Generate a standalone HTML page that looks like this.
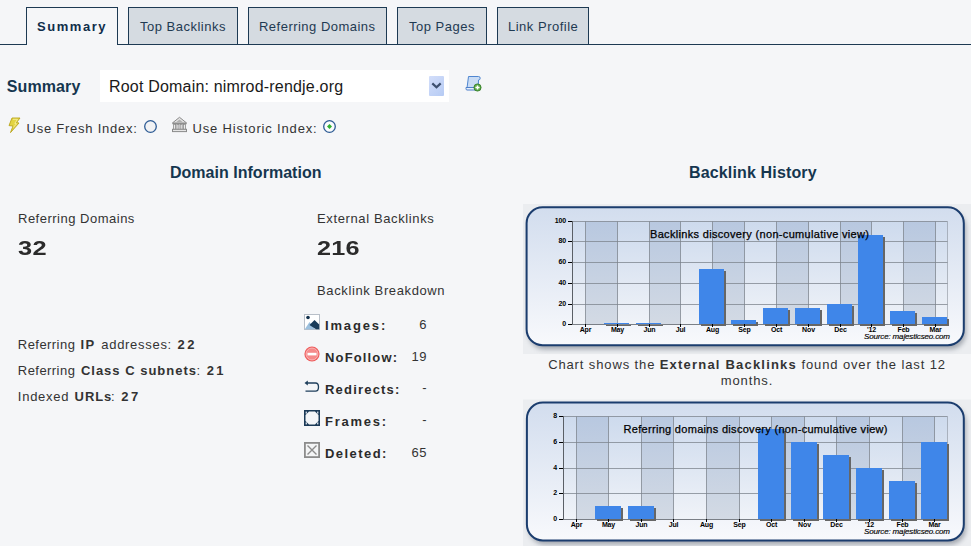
<!DOCTYPE html>
<html><head><meta charset="utf-8"><style>
html,body{margin:0;padding:0}
body{width:971px;height:546px;overflow:hidden;position:relative;background:#f5f6f8;font-family:'Liberation Sans', sans-serif}
.t{position:absolute;white-space:nowrap;font-family:'Liberation Sans', sans-serif}
.ax{font-family:'Liberation Sans', sans-serif;font-size:7px;font-weight:bold;fill:#000;letter-spacing:-0.15px}
.ti{font-family:'Liberation Sans', sans-serif;font-size:11px;fill:#000;stroke:#000;stroke-width:0.25px}
.src{font-family:'Liberation Sans', sans-serif;font-size:8px;font-style:italic;fill:#000;stroke:#000;stroke-width:0.15px}
</style></head><body>
<div style="position:absolute;left:0;top:44px;width:971px;height:1px;background:#1d3a53"></div>
<div style="position:absolute;left:26px;top:7px;width:90px;height:37px;border:1px solid #1d3a53;border-bottom:none;background:#f5f6f8"></div>
<div style="position:absolute;left:128px;top:7px;width:108px;height:36px;border:1px solid #1d3a53;background:#d5dbe1"></div>
<div style="position:absolute;left:248px;top:7px;width:137px;height:36px;border:1px solid #1d3a53;background:#d5dbe1"></div>
<div style="position:absolute;left:397px;top:7px;width:88px;height:36px;border:1px solid #1d3a53;background:#d5dbe1"></div>
<div style="position:absolute;left:497px;top:7px;width:90px;height:36px;border:1px solid #1d3a53;background:#d5dbe1"></div>
<div class="t" style="left:37.00px;top:20.00px;font-size:13px;line-height:13px;font-weight:bold;color:#0f2d4a;letter-spacing:1.55px;font-style:normal;">Summary</div>
<div class="t" style="left:140.00px;top:20.00px;font-size:13px;line-height:13px;font-weight:normal;color:#1f3a52;letter-spacing:0.5px;font-style:normal;">Top Backlinks</div>
<div class="t" style="left:259.00px;top:20.00px;font-size:13px;line-height:13px;font-weight:normal;color:#1f3a52;letter-spacing:0.48px;font-style:normal;">Referring Domains</div>
<div class="t" style="left:409.00px;top:20.00px;font-size:13px;line-height:13px;font-weight:normal;color:#1f3a52;letter-spacing:0.5px;font-style:normal;">Top Pages</div>
<div class="t" style="left:508.00px;top:20.00px;font-size:13px;line-height:13px;font-weight:normal;color:#1f3a52;letter-spacing:0.5px;font-style:normal;">Link Profile</div>
<div class="t" style="left:6.80px;top:78.96px;font-size:16px;line-height:16px;font-weight:bold;color:#15364f;letter-spacing:0.1px;font-style:normal;">Summary</div>
<div style="position:absolute;left:100px;top:70px;width:349px;height:32px;background:#fff"></div>
<div class="t" style="left:109.00px;top:79.46px;font-size:16px;line-height:16px;font-weight:normal;color:#1a1a1a;letter-spacing:0.19px;font-style:normal;">Root Domain: nimrod-rendje.org</div>
<div style="position:absolute;left:429px;top:76px;width:15px;height:20px;background:linear-gradient(135deg,#d3defa,#b6cbf4);border-radius:1px"></div>
<svg style="position:absolute;left:429px;top:76px" width="15" height="20"><path d="M3.3 7.4 L7.5 11.3 L11.7 7.4" fill="none" stroke="#3d4f6f" stroke-width="2.2"/></svg>
<svg style="position:absolute;left:465px;top:75px" width="17" height="17" viewBox="0 0 17 17">
<path d="M3.5 1.5 H13.5 Q15.2 1.5 15.2 3.2 Q15.2 5 13.5 5 L13.2 13 H2 Z" fill="#c9dcf5" stroke="#4f86d0" stroke-width="1"/>
<path d="M1 12.5 H12 V15 H2 Q1 15 1 13.7 Z" fill="#e9f0fb" stroke="#4d7fc9" stroke-width="1"/>
<circle cx="12.5" cy="12.5" r="3.6" fill="#5aa842" stroke="#2f7a24" stroke-width="0.8"/>
<path d="M12.5 10.4 V14.6 M10.4 12.5 H14.6" stroke="#fff" stroke-width="1.5"/>
</svg>
<svg style="position:absolute;left:8px;top:117px" width="14" height="17" viewBox="0 0 14 17">
<path d="M4 1 H12 L8.5 5.6 L11 6 L2.5 15.6 L5 9 L1 8.6 Z" fill="#e3d443" stroke="#b9a51c" stroke-width="0.9" stroke-linejoin="round"/>
<path d="M5 2.3 H9.5 L6.8 6.4 L8.5 6.8 L5.2 10.5" fill="none" stroke="#f6ee9a" stroke-width="0.9"/>
</svg>
<div class="t" style="left:26.50px;top:122.00px;font-size:13px;line-height:13px;font-weight:normal;color:#333;letter-spacing:0.76px;font-style:normal;">Use Fresh Index:</div>
<svg style="position:absolute;left:143px;top:119px" width="16" height="16"><circle cx="7.5" cy="7.5" r="5.8" fill="#f1f2f4" stroke="#2d5b94" stroke-width="1.3"/></svg>
<svg style="position:absolute;left:171px;top:116px" width="17" height="17" viewBox="0 0 17 17">
<path d="M8.5 1.3 L15.6 7 H1.4 Z" fill="#e4e4e4" stroke="#8a8a8a" stroke-width="1" stroke-linejoin="round"/>
<path d="M8.5 3.6 L11.6 6 H5.4 Z" fill="#b0b0b0"/>
<rect x="1.5" y="7" width="14" height="1.3" fill="#8f8f8f"/>
<rect x="2.6" y="8.3" width="2" height="5" fill="#ececec" stroke="#8a8a8a" stroke-width="0.8"/>
<rect x="5.9" y="8.3" width="2" height="5" fill="#ececec" stroke="#8a8a8a" stroke-width="0.8"/>
<rect x="9.2" y="8.3" width="2" height="5" fill="#ececec" stroke="#8a8a8a" stroke-width="0.8"/>
<rect x="12.5" y="8.3" width="2" height="5" fill="#ececec" stroke="#8a8a8a" stroke-width="0.8"/>
<rect x="1.5" y="13.3" width="14" height="2.3" fill="#e6e6e6" stroke="#8a8a8a" stroke-width="1"/>
</svg>
<div class="t" style="left:192.50px;top:122.00px;font-size:13px;line-height:13px;font-weight:normal;color:#333;letter-spacing:0.84px;font-style:normal;">Use Historic Index:</div>
<svg style="position:absolute;left:322px;top:119px" width="16" height="16"><circle cx="7.5" cy="7.5" r="5.8" fill="#fbfcfd" stroke="#2d5b94" stroke-width="1.3"/><path d="M7.5 5 L10 7.5 L7.5 10 L5 7.5 Z" fill="#2fb02f"/></svg>
<div class="t" style="left:170.00px;top:165.46px;font-size:16px;line-height:16px;font-weight:bold;color:#15364f;letter-spacing:0.02px;font-style:normal;">Domain Information</div>
<div class="t" style="left:18.00px;top:212.00px;font-size:13px;line-height:13px;font-weight:normal;color:#333;letter-spacing:0.5px;font-style:normal;">Referring Domains</div>
<div class="t" style="left:18.00px;top:238.07px;font-size:20px;line-height:20px;font-weight:bold;color:#2b2b2b;letter-spacing:0.3px;font-style:normal;"><span style="display:inline-block;transform:scaleX(1.27);transform-origin:0 0">32</span></div>
<div class="t" style="left:317.00px;top:212.00px;font-size:13px;line-height:13px;font-weight:normal;color:#333;letter-spacing:0.62px;font-style:normal;">External Backlinks</div>
<div class="t" style="left:317.00px;top:238.07px;font-size:20px;line-height:20px;font-weight:bold;color:#2b2b2b;letter-spacing:0.2px;font-style:normal;"><span style="display:inline-block;transform:scaleX(1.26);transform-origin:0 0">216</span></div>
<div class="t" style="left:317.00px;top:284.00px;font-size:13px;line-height:13px;font-weight:normal;color:#333;letter-spacing:0.62px;font-style:normal;">Backlink Breakdown</div>
<div class="t" style="left:325.00px;top:319.00px;font-size:13px;line-height:13px;font-weight:bold;color:#2b2b2b;letter-spacing:1.85px;font-style:normal;">Images:</div>
<div class="t" style="right:544px;top:318.00px;font-size:13px;line-height:13px;color:#333;letter-spacing:0.5px">6</div>
<div class="t" style="left:325.00px;top:351.00px;font-size:13px;line-height:13px;font-weight:bold;color:#2b2b2b;letter-spacing:1.15px;font-style:normal;">NoFollow:</div>
<div class="t" style="right:544px;top:350.00px;font-size:13px;line-height:13px;color:#333;letter-spacing:0.5px">19</div>
<div class="t" style="left:325.00px;top:383.00px;font-size:13px;line-height:13px;font-weight:bold;color:#2b2b2b;letter-spacing:1.2px;font-style:normal;">Redirects:</div>
<div class="t" style="right:544px;top:380.50px;font-size:13px;line-height:13px;color:#333;letter-spacing:0.5px">-</div>
<div class="t" style="left:325.00px;top:415.00px;font-size:13px;line-height:13px;font-weight:bold;color:#2b2b2b;letter-spacing:1.73px;font-style:normal;">Frames:</div>
<div class="t" style="right:544px;top:412.50px;font-size:13px;line-height:13px;color:#333;letter-spacing:0.5px">-</div>
<div class="t" style="left:325.00px;top:447.00px;font-size:13px;line-height:13px;font-weight:bold;color:#2b2b2b;letter-spacing:1.45px;font-style:normal;">Deleted:</div>
<div class="t" style="right:544px;top:446.00px;font-size:13px;line-height:13px;color:#333;letter-spacing:0.5px">65</div>
<svg style="position:absolute;left:304px;top:314px" width="16" height="16" viewBox="0 0 16 16">
<rect x="0.5" y="0.5" width="15" height="15" fill="#fff" stroke="#b8bfc8" stroke-width="1"/>
<circle cx="4" cy="3.5" r="1.8" fill="#12304d"/>
<path d="M0.8 15.2 L5.5 8 L11 15.2 Z" fill="#9cc0de"/>
<path d="M5.5 11 L10.5 6 L15.2 10.5 V15.2 H12 Z" fill="#1a3c5a"/>
</svg>
<svg style="position:absolute;left:304px;top:346px" width="16" height="16" viewBox="0 0 16 16">
<circle cx="8" cy="8" r="7.6" fill="#ee5c5c"/><circle cx="8" cy="8" r="6" fill="#f58a8a" stroke="#fbd0d0" stroke-width="0.7"/>
<rect x="3.5" y="6.8" width="9" height="2.6" fill="#fff"/>
</svg>
<svg style="position:absolute;left:304px;top:378px" width="16" height="16" viewBox="0 0 16 16">
<path d="M2.5 5 H11.5 Q14.5 5 14.5 9 Q14.5 13.2 11.5 13.2 H1.5" fill="none" stroke="#1f3f5c" stroke-width="1.3"/>
<path d="M0.5 5 L3.8 2.5 V7.5 Z" fill="#1f3f5c"/>
</svg>
<svg style="position:absolute;left:304px;top:410px" width="16" height="16" viewBox="0 0 16 16">
<rect x="0" y="0" width="16" height="16" fill="#1b3a57"/>
<path d="M5 1.5 H11 L14.5 5 V11 L11 14.5 H5 L1.5 11 V5 Z" fill="#f3f5f8"/>
<rect x="1.6" y="1.6" width="1.4" height="2" fill="#cfd8e3"/><rect x="13" y="1.6" width="1.4" height="2" fill="#cfd8e3"/>
<rect x="1.6" y="12.4" width="1.4" height="2" fill="#cfd8e3"/><rect x="13" y="12.4" width="1.4" height="2" fill="#cfd8e3"/>
</svg>
<svg style="position:absolute;left:304px;top:442px" width="16" height="16" viewBox="0 0 16 16">
<rect x="0.9" y="0.9" width="14.2" height="14.2" fill="#f4f5f6" stroke="#8c8c8c" stroke-width="1.8"/>
<path d="M3.5 3.5 L12.5 12.5 M12.5 3.5 L3.5 12.5" stroke="#8c8c8c" stroke-width="1.4"/>
</svg>
<div class="t" style="left:17.80px;top:338.20px;font-size:13px;line-height:13px;font-weight:normal;color:#333;letter-spacing:0.45px;font-style:normal;">Referring</div>
<div class="t" style="left:80.50px;top:338.20px;font-size:13px;line-height:13px;font-weight:bold;color:#333;letter-spacing:1.4px;font-style:normal;">IP</div>
<div class="t" style="left:101.30px;top:338.20px;font-size:13px;line-height:13px;font-weight:normal;color:#333;letter-spacing:0.7px;font-style:normal;">addresses:</div>
<div class="t" style="left:177.60px;top:338.20px;font-size:13px;line-height:13px;font-weight:bold;color:#333;letter-spacing:2.4px;font-style:normal;">22</div>
<div class="t" style="left:17.80px;top:364.20px;font-size:13px;line-height:13px;font-weight:normal;color:#333;letter-spacing:0.45px;font-style:normal;">Referring</div>
<div class="t" style="left:80.90px;top:364.20px;font-size:13px;line-height:13px;font-weight:bold;color:#333;letter-spacing:1.0px;font-style:normal;">Class C subnets</div>
<div class="t" style="left:196.40px;top:364.20px;font-size:13px;line-height:13px;font-weight:normal;color:#333;letter-spacing:0.5px;font-style:normal;">:</div>
<div class="t" style="left:206.70px;top:364.20px;font-size:13px;line-height:13px;font-weight:bold;color:#333;letter-spacing:2.4px;font-style:normal;">21</div>
<div class="t" style="left:17.80px;top:390.20px;font-size:13px;line-height:13px;font-weight:normal;color:#333;letter-spacing:0.75px;font-style:normal;">Indexed</div>
<div class="t" style="left:74.60px;top:390.20px;font-size:13px;line-height:13px;font-weight:bold;color:#333;letter-spacing:0.9px;font-style:normal;">URLs</div>
<div class="t" style="left:111.10px;top:390.20px;font-size:13px;line-height:13px;font-weight:normal;color:#333;letter-spacing:0.5px;font-style:normal;">:</div>
<div class="t" style="left:121.30px;top:390.20px;font-size:13px;line-height:13px;font-weight:bold;color:#333;letter-spacing:2.4px;font-style:normal;">27</div>
<div class="t" style="left:689.00px;top:165.46px;font-size:16px;line-height:16px;font-weight:bold;color:#15364f;letter-spacing:0.15px;font-style:normal;">Backlink History</div>

<svg style="position:absolute;left:0;top:0" width="971" height="546" viewBox="0 0 971 546">
<defs>
<linearGradient id="fr" x1="0" y1="0" x2="0" y2="1"><stop offset="0" stop-color="#d2ddee"/><stop offset="1" stop-color="#f8f9fc"/></linearGradient>
<linearGradient id="pl" x1="0" y1="0" x2="0" y2="1"><stop offset="0" stop-color="#cddaed"/><stop offset="1" stop-color="#f0f3f8"/></linearGradient>
<linearGradient id="dk" x1="0" y1="0" x2="0" y2="1"><stop offset="0" stop-color="#b8c8e0"/><stop offset="1" stop-color="#d3dae4"/></linearGradient>
<filter id="blur" x="-10%" y="-10%" width="120%" height="130%"><feGaussianBlur stdDeviation="2.5"/></filter>
</defs>
<rect x="523" y="204" width="448" height="150" fill="#ebedf0"/>
<rect x="528.6" y="211.3" width="437.19999999999993" height="137.89999999999998" rx="16" fill="#6f7682" opacity="0.6" filter="url(#blur)"/>
<rect x="526.6" y="207.3" width="437.19999999999993" height="137.89999999999998" rx="16" fill="url(#fr)" stroke="#1b3d6e" stroke-width="2"/>
<rect x="572.5" y="221.5" width="375.0" height="103" fill="url(#pl)"/>
<rect x="585.5" y="221.5" width="32" height="103" fill="url(#dk)"/>
<rect x="649.5" y="221.5" width="31" height="103" fill="url(#dk)"/>
<rect x="712.5" y="221.5" width="32" height="103" fill="url(#dk)"/>
<rect x="776.5" y="221.5" width="32" height="103" fill="url(#dk)"/>
<rect x="840.5" y="221.5" width="31" height="103" fill="url(#dk)"/>
<rect x="903.5" y="221.5" width="32" height="103" fill="url(#dk)"/>
<line x1="572.5" y1="324.5" x2="947.5" y2="324.5" stroke="#7c838c" stroke-width="1" opacity="0.75"/>
<line x1="568" y1="324.5" x2="572.5" y2="324.5" stroke="#000" stroke-width="1"/>
<text x="566" y="326.3" text-anchor="end" class="ax">0</text>
<line x1="572.5" y1="304.5" x2="947.5" y2="304.5" stroke="#7c838c" stroke-width="1" opacity="0.75"/>
<line x1="568" y1="304.5" x2="572.5" y2="304.5" stroke="#000" stroke-width="1"/>
<text x="566" y="306.3" text-anchor="end" class="ax">20</text>
<line x1="572.5" y1="283.5" x2="947.5" y2="283.5" stroke="#7c838c" stroke-width="1" opacity="0.75"/>
<line x1="568" y1="283.5" x2="572.5" y2="283.5" stroke="#000" stroke-width="1"/>
<text x="566" y="285.3" text-anchor="end" class="ax">40</text>
<line x1="572.5" y1="262.5" x2="947.5" y2="262.5" stroke="#7c838c" stroke-width="1" opacity="0.75"/>
<line x1="568" y1="262.5" x2="572.5" y2="262.5" stroke="#000" stroke-width="1"/>
<text x="566" y="264.3" text-anchor="end" class="ax">60</text>
<line x1="572.5" y1="241.5" x2="947.5" y2="241.5" stroke="#7c838c" stroke-width="1" opacity="0.75"/>
<line x1="568" y1="241.5" x2="572.5" y2="241.5" stroke="#000" stroke-width="1"/>
<text x="566" y="243.3" text-anchor="end" class="ax">80</text>
<line x1="572.5" y1="221.5" x2="947.5" y2="221.5" stroke="#7c838c" stroke-width="1" opacity="0.75"/>
<line x1="568" y1="221.5" x2="572.5" y2="221.5" stroke="#000" stroke-width="1"/>
<text x="566" y="223.3" text-anchor="end" class="ax">100</text>
<line x1="585.5" y1="221.5" x2="585.5" y2="324.5" stroke="#7c838c" stroke-width="1" opacity="0.75"/>
<line x1="617.5" y1="221.5" x2="617.5" y2="324.5" stroke="#7c838c" stroke-width="1" opacity="0.75"/>
<line x1="649.5" y1="221.5" x2="649.5" y2="324.5" stroke="#7c838c" stroke-width="1" opacity="0.75"/>
<line x1="680.5" y1="221.5" x2="680.5" y2="324.5" stroke="#7c838c" stroke-width="1" opacity="0.75"/>
<line x1="712.5" y1="221.5" x2="712.5" y2="324.5" stroke="#7c838c" stroke-width="1" opacity="0.75"/>
<line x1="744.5" y1="221.5" x2="744.5" y2="324.5" stroke="#7c838c" stroke-width="1" opacity="0.75"/>
<line x1="776.5" y1="221.5" x2="776.5" y2="324.5" stroke="#7c838c" stroke-width="1" opacity="0.75"/>
<line x1="808.5" y1="221.5" x2="808.5" y2="324.5" stroke="#7c838c" stroke-width="1" opacity="0.75"/>
<line x1="840.5" y1="221.5" x2="840.5" y2="324.5" stroke="#7c838c" stroke-width="1" opacity="0.75"/>
<line x1="871.5" y1="221.5" x2="871.5" y2="324.5" stroke="#7c838c" stroke-width="1" opacity="0.75"/>
<line x1="903.5" y1="221.5" x2="903.5" y2="324.5" stroke="#7c838c" stroke-width="1" opacity="0.75"/>
<line x1="935.5" y1="221.5" x2="935.5" y2="324.5" stroke="#7c838c" stroke-width="1" opacity="0.75"/>
<line x1="947.5" y1="221.5" x2="947.5" y2="324.5" stroke="#7c838c" stroke-width="1" opacity="0.5"/>
<line x1="572.5" y1="221" x2="572.5" y2="325" stroke="#5a5f66" stroke-width="1"/>
<line x1="572.5" y1="324.5" x2="947.5" y2="324.5" stroke="#7a7f86" stroke-width="1"/>
<rect x="606" y="325" width="25" height="1" fill="#666"/>
<rect x="604" y="323" width="25" height="1" fill="#3f86e9"/>
<rect x="638" y="325" width="25" height="1" fill="#666"/>
<rect x="636" y="323" width="25" height="1" fill="#3f86e9"/>
<rect x="701" y="271" width="25" height="55" fill="#666"/>
<rect x="699" y="269" width="25" height="55" fill="#3f86e9"/>
<rect x="733" y="322" width="25" height="4" fill="#666"/>
<rect x="731" y="320" width="25" height="4" fill="#3f86e9"/>
<rect x="765" y="310" width="25" height="16" fill="#666"/>
<rect x="763" y="308" width="25" height="16" fill="#3f86e9"/>
<rect x="797" y="310" width="25" height="16" fill="#666"/>
<rect x="795" y="308" width="25" height="16" fill="#3f86e9"/>
<rect x="829" y="306" width="25" height="20" fill="#666"/>
<rect x="827" y="304" width="25" height="20" fill="#3f86e9"/>
<rect x="860" y="237" width="25" height="89" fill="#666"/>
<rect x="858" y="235" width="25" height="89" fill="#3f86e9"/>
<rect x="892" y="313" width="25" height="13" fill="#666"/>
<rect x="890" y="311" width="25" height="13" fill="#3f86e9"/>
<rect x="924" y="319" width="25" height="7" fill="#666"/>
<rect x="922" y="317" width="25" height="7" fill="#3f86e9"/>
<line x1="585.5" y1="324" x2="585.5" y2="327" stroke="#000" stroke-width="1"/>
<line x1="617.5" y1="324" x2="617.5" y2="327" stroke="#000" stroke-width="1"/>
<line x1="649.5" y1="324" x2="649.5" y2="327" stroke="#000" stroke-width="1"/>
<line x1="680.5" y1="324" x2="680.5" y2="327" stroke="#000" stroke-width="1"/>
<line x1="712.5" y1="324" x2="712.5" y2="327" stroke="#000" stroke-width="1"/>
<line x1="744.5" y1="324" x2="744.5" y2="327" stroke="#000" stroke-width="1"/>
<line x1="776.5" y1="324" x2="776.5" y2="327" stroke="#000" stroke-width="1"/>
<line x1="808.5" y1="324" x2="808.5" y2="327" stroke="#000" stroke-width="1"/>
<line x1="840.5" y1="324" x2="840.5" y2="327" stroke="#000" stroke-width="1"/>
<line x1="871.5" y1="324" x2="871.5" y2="327" stroke="#000" stroke-width="1"/>
<line x1="903.5" y1="324" x2="903.5" y2="327" stroke="#000" stroke-width="1"/>
<line x1="935.5" y1="324" x2="935.5" y2="327" stroke="#000" stroke-width="1"/>
<text x="585.5" y="332" text-anchor="middle" class="ax">Apr</text>
<text x="617.5" y="332" text-anchor="middle" class="ax">May</text>
<text x="649.5" y="332" text-anchor="middle" class="ax">Jun</text>
<text x="680.5" y="332" text-anchor="middle" class="ax">Jul</text>
<text x="712.5" y="332" text-anchor="middle" class="ax">Aug</text>
<text x="744.5" y="332" text-anchor="middle" class="ax">Sep</text>
<text x="776.5" y="332" text-anchor="middle" class="ax">Oct</text>
<text x="808.5" y="332" text-anchor="middle" class="ax">Nov</text>
<text x="840.5" y="332" text-anchor="middle" class="ax">Dec</text>
<text x="871.5" y="332" text-anchor="middle" class="ax">'12</text>
<text x="903.5" y="332" text-anchor="middle" class="ax">Feb</text>
<text x="935.5" y="332" text-anchor="middle" class="ax">Mar</text>
<text x="650" y="238" class="ti" textLength="219" lengthAdjust="spacing">Backlinks discovery (non-cumulative view)</text>
<text x="864" y="339" class="src" textLength="86" lengthAdjust="spacing">Source: majesticseo.com</text>
<rect x="523" y="399.5" width="448" height="150" fill="#ebedf0"/>
<rect x="528.9" y="406.5" width="436.9" height="137.89999999999998" rx="16" fill="#6f7682" opacity="0.6" filter="url(#blur)"/>
<rect x="526.9" y="402.5" width="436.9" height="137.89999999999998" rx="16" fill="url(#fr)" stroke="#1b3d6e" stroke-width="2"/>
<rect x="563.5" y="416.5" width="384.0" height="103" fill="url(#pl)"/>
<rect x="576.5" y="416.5" width="32" height="103" fill="url(#dk)"/>
<rect x="641.5" y="416.5" width="32" height="103" fill="url(#dk)"/>
<rect x="706.5" y="416.5" width="33" height="103" fill="url(#dk)"/>
<rect x="771.5" y="416.5" width="33" height="103" fill="url(#dk)"/>
<rect x="836.5" y="416.5" width="33" height="103" fill="url(#dk)"/>
<rect x="902.5" y="416.5" width="32" height="103" fill="url(#dk)"/>
<line x1="563.5" y1="519.5" x2="947.5" y2="519.5" stroke="#7c838c" stroke-width="1" opacity="0.75"/>
<line x1="559" y1="519.5" x2="563.5" y2="519.5" stroke="#000" stroke-width="1"/>
<text x="557" y="521.3" text-anchor="end" class="ax">0</text>
<line x1="563.5" y1="493.5" x2="947.5" y2="493.5" stroke="#7c838c" stroke-width="1" opacity="0.75"/>
<line x1="559" y1="493.5" x2="563.5" y2="493.5" stroke="#000" stroke-width="1"/>
<text x="557" y="495.3" text-anchor="end" class="ax">2</text>
<line x1="563.5" y1="468.5" x2="947.5" y2="468.5" stroke="#7c838c" stroke-width="1" opacity="0.75"/>
<line x1="559" y1="468.5" x2="563.5" y2="468.5" stroke="#000" stroke-width="1"/>
<text x="557" y="470.3" text-anchor="end" class="ax">4</text>
<line x1="563.5" y1="442.5" x2="947.5" y2="442.5" stroke="#7c838c" stroke-width="1" opacity="0.75"/>
<line x1="559" y1="442.5" x2="563.5" y2="442.5" stroke="#000" stroke-width="1"/>
<text x="557" y="444.3" text-anchor="end" class="ax">6</text>
<line x1="563.5" y1="416.5" x2="947.5" y2="416.5" stroke="#7c838c" stroke-width="1" opacity="0.75"/>
<line x1="559" y1="416.5" x2="563.5" y2="416.5" stroke="#000" stroke-width="1"/>
<text x="557" y="418.3" text-anchor="end" class="ax">8</text>
<line x1="576.5" y1="416.5" x2="576.5" y2="519.5" stroke="#7c838c" stroke-width="1" opacity="0.75"/>
<line x1="608.5" y1="416.5" x2="608.5" y2="519.5" stroke="#7c838c" stroke-width="1" opacity="0.75"/>
<line x1="641.5" y1="416.5" x2="641.5" y2="519.5" stroke="#7c838c" stroke-width="1" opacity="0.75"/>
<line x1="673.5" y1="416.5" x2="673.5" y2="519.5" stroke="#7c838c" stroke-width="1" opacity="0.75"/>
<line x1="706.5" y1="416.5" x2="706.5" y2="519.5" stroke="#7c838c" stroke-width="1" opacity="0.75"/>
<line x1="739.5" y1="416.5" x2="739.5" y2="519.5" stroke="#7c838c" stroke-width="1" opacity="0.75"/>
<line x1="771.5" y1="416.5" x2="771.5" y2="519.5" stroke="#7c838c" stroke-width="1" opacity="0.75"/>
<line x1="804.5" y1="416.5" x2="804.5" y2="519.5" stroke="#7c838c" stroke-width="1" opacity="0.75"/>
<line x1="836.5" y1="416.5" x2="836.5" y2="519.5" stroke="#7c838c" stroke-width="1" opacity="0.75"/>
<line x1="869.5" y1="416.5" x2="869.5" y2="519.5" stroke="#7c838c" stroke-width="1" opacity="0.75"/>
<line x1="902.5" y1="416.5" x2="902.5" y2="519.5" stroke="#7c838c" stroke-width="1" opacity="0.75"/>
<line x1="934.5" y1="416.5" x2="934.5" y2="519.5" stroke="#7c838c" stroke-width="1" opacity="0.75"/>
<line x1="947.5" y1="416.5" x2="947.5" y2="519.5" stroke="#7c838c" stroke-width="1" opacity="0.5"/>
<line x1="563.5" y1="416" x2="563.5" y2="520" stroke="#5a5f66" stroke-width="1"/>
<line x1="563.5" y1="519.5" x2="947.5" y2="519.5" stroke="#7a7f86" stroke-width="1"/>
<rect x="597" y="508" width="26" height="13" fill="#666"/>
<rect x="595" y="506" width="26" height="13" fill="#3f86e9"/>
<rect x="630" y="508" width="26" height="13" fill="#666"/>
<rect x="628" y="506" width="26" height="13" fill="#3f86e9"/>
<rect x="760" y="431" width="26" height="90" fill="#666"/>
<rect x="758" y="429" width="26" height="90" fill="#3f86e9"/>
<rect x="793" y="444" width="26" height="77" fill="#666"/>
<rect x="791" y="442" width="26" height="77" fill="#3f86e9"/>
<rect x="825" y="457" width="26" height="64" fill="#666"/>
<rect x="823" y="455" width="26" height="64" fill="#3f86e9"/>
<rect x="858" y="470" width="26" height="51" fill="#666"/>
<rect x="856" y="468" width="26" height="51" fill="#3f86e9"/>
<rect x="891" y="483" width="26" height="38" fill="#666"/>
<rect x="889" y="481" width="26" height="38" fill="#3f86e9"/>
<rect x="923" y="444" width="26" height="77" fill="#666"/>
<rect x="921" y="442" width="26" height="77" fill="#3f86e9"/>
<line x1="576.5" y1="519" x2="576.5" y2="522" stroke="#000" stroke-width="1"/>
<line x1="608.5" y1="519" x2="608.5" y2="522" stroke="#000" stroke-width="1"/>
<line x1="641.5" y1="519" x2="641.5" y2="522" stroke="#000" stroke-width="1"/>
<line x1="673.5" y1="519" x2="673.5" y2="522" stroke="#000" stroke-width="1"/>
<line x1="706.5" y1="519" x2="706.5" y2="522" stroke="#000" stroke-width="1"/>
<line x1="739.5" y1="519" x2="739.5" y2="522" stroke="#000" stroke-width="1"/>
<line x1="771.5" y1="519" x2="771.5" y2="522" stroke="#000" stroke-width="1"/>
<line x1="804.5" y1="519" x2="804.5" y2="522" stroke="#000" stroke-width="1"/>
<line x1="836.5" y1="519" x2="836.5" y2="522" stroke="#000" stroke-width="1"/>
<line x1="869.5" y1="519" x2="869.5" y2="522" stroke="#000" stroke-width="1"/>
<line x1="902.5" y1="519" x2="902.5" y2="522" stroke="#000" stroke-width="1"/>
<line x1="934.5" y1="519" x2="934.5" y2="522" stroke="#000" stroke-width="1"/>
<text x="576.5" y="526.5" text-anchor="middle" class="ax">Apr</text>
<text x="608.5" y="526.5" text-anchor="middle" class="ax">May</text>
<text x="641.5" y="526.5" text-anchor="middle" class="ax">Jun</text>
<text x="673.5" y="526.5" text-anchor="middle" class="ax">Jul</text>
<text x="706.5" y="526.5" text-anchor="middle" class="ax">Aug</text>
<text x="739.5" y="526.5" text-anchor="middle" class="ax">Sep</text>
<text x="771.5" y="526.5" text-anchor="middle" class="ax">Oct</text>
<text x="804.5" y="526.5" text-anchor="middle" class="ax">Nov</text>
<text x="836.5" y="526.5" text-anchor="middle" class="ax">Dec</text>
<text x="869.5" y="526.5" text-anchor="middle" class="ax">'12</text>
<text x="902.5" y="526.5" text-anchor="middle" class="ax">Feb</text>
<text x="934.5" y="526.5" text-anchor="middle" class="ax">Mar</text>
<text x="623.5" y="433" class="ti" textLength="264" lengthAdjust="spacing">Referring domains discovery (non-cumulative view)</text>
<text x="864" y="533.7" class="src" textLength="86" lengthAdjust="spacing">Source: majesticseo.com</text>
</svg>

<div class="t" style="left:523px;top:357px;width:448px;text-align:center;white-space:normal;font-size:13px;line-height:16px;color:#333;letter-spacing:0.88px">Chart shows the <b style="letter-spacing:1.2px">External Backlinks</b> found over the last 12<br>months.</div>

</body></html>
